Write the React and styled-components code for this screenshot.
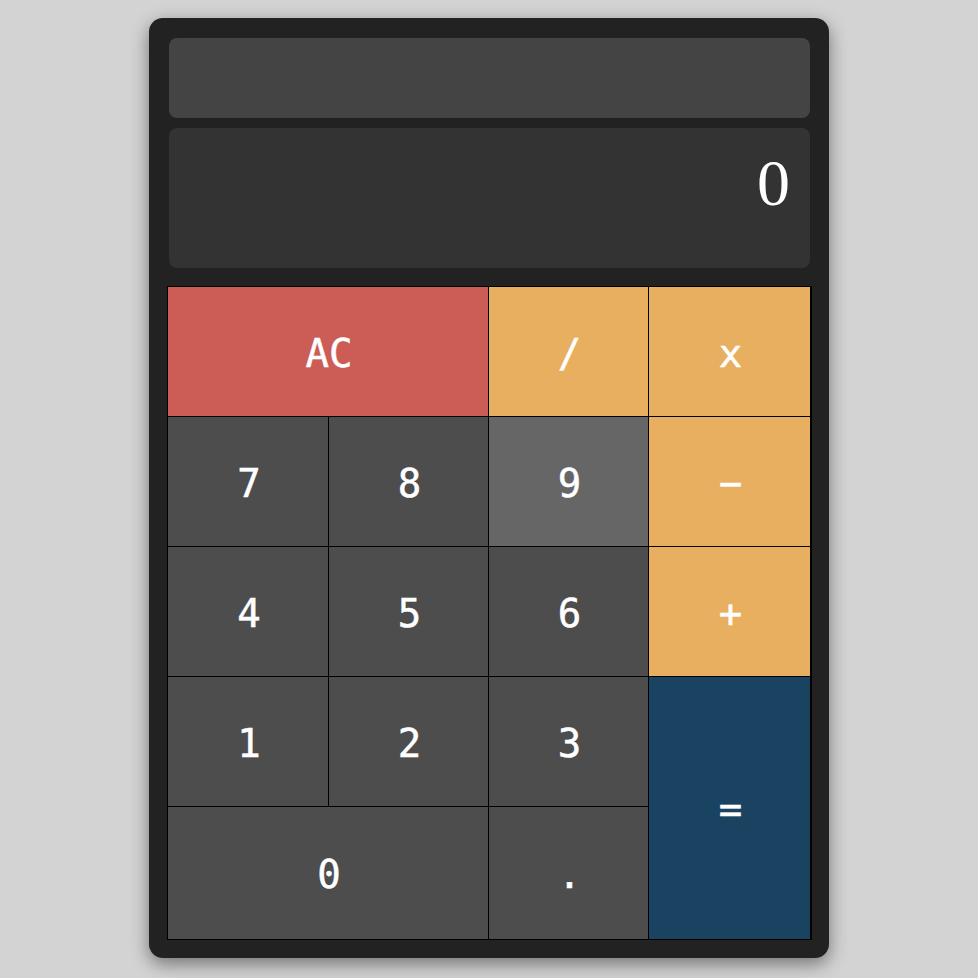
import React, { useState } from 'react';
import styled, { createGlobalStyle, css } from 'styled-components';

const GlobalStyle = createGlobalStyle`
  html, body {
    margin: 0;
    padding: 0;
    background: #d3d3d3;
  }
  body {
    font-family: "DejaVu Sans Mono", monospace;
    min-height: 978px;
  }
`;

const Page = styled.div`
  display: flex;
  justify-content: center;
  padding-top: 18px;
`;

const Calculator = styled.div`
  width: 680px;
  box-sizing: border-box;
  padding: 20px 19px 18px 20px;
  background: #222;
  border-radius: 14px;
  box-shadow: 0 6px 18px rgba(0, 0, 0, 0.45);
  display: flex;
  flex-direction: column;
`;

const Formula = styled.div`
  height: 80px;
  background: #444;
  border-radius: 8px;
  color: #ffa500;
  font-size: 24px;
  text-align: right;
  padding: 0 20px;
  box-sizing: border-box;
`;

const Output = styled.div`
  height: 140px;
  margin-top: 10px;
  background: #333;
  border-radius: 8px;
  color: #fff;
  font-family: "Liberation Serif", serif;
  font-size: 66px;
  line-height: 1;
  text-align: right;
  padding: 22px 20px 0;
  box-sizing: border-box;
`;

const Keys = styled.div`
  margin: 18px 0 0 -2px;
  width: 643px;
  display: grid;
  grid-template-columns: 160px 159px 159px 161px;
  grid-template-rows: 129px 129px 129px 129px 132px;
  gap: 1px;
  padding: 1px;
  background: #000;
`;

const tones = {
  num: '#4d4d4d',
  clear: '#cb5d56',
  op: '#e8af60',
  equals: '#194360',
};

const Key = styled.button`
  border: none;
  margin: 0;
  padding: 3px 0 0 2px;
  color: #fff;
  font-family: "DejaVu Sans Mono", monospace;
  font-size: 39px;
  -webkit-text-stroke: 0.5px #fff;
  cursor: pointer;
  background: ${(p) => tones[p.$tone]};
  ${(p) => p.$wide && css`grid-column: span 2;`}
  ${(p) => p.$tall && css`grid-row: span 2;`}
  ${(p) => p.$hover && css`background: #666;`}
  &:hover {
    opacity: 0.9;
  }
`;

const EqualsKey = styled(Key)`
  display: flex;
  justify-content: center;
  align-items: flex-start;
  padding-top: 110px;
`;

export default function App() {
  const [value] = useState('0');

  return (
    <>
      <GlobalStyle />
      <Page>
        <Calculator>
          <Formula />
          <Output>{value}</Output>
          <Keys>
            <Key $tone="clear" $wide>AC</Key>
            <Key $tone="op">/</Key>
            <Key $tone="op">x</Key>
            <Key $tone="num">7</Key>
            <Key $tone="num">8</Key>
            <Key $tone="num" $hover>9</Key>
            <Key $tone="op">−</Key>
            <Key $tone="num">4</Key>
            <Key $tone="num">5</Key>
            <Key $tone="num">6</Key>
            <Key $tone="op">+</Key>
            <Key $tone="num">1</Key>
            <Key $tone="num">2</Key>
            <Key $tone="num">3</Key>
            <EqualsKey $tone="equals" $tall>=</EqualsKey>
            <Key $tone="num" $wide>0</Key>
            <Key $tone="num">.</Key>
          </Keys>
        </Calculator>
      </Page>
    </>
  );
}
